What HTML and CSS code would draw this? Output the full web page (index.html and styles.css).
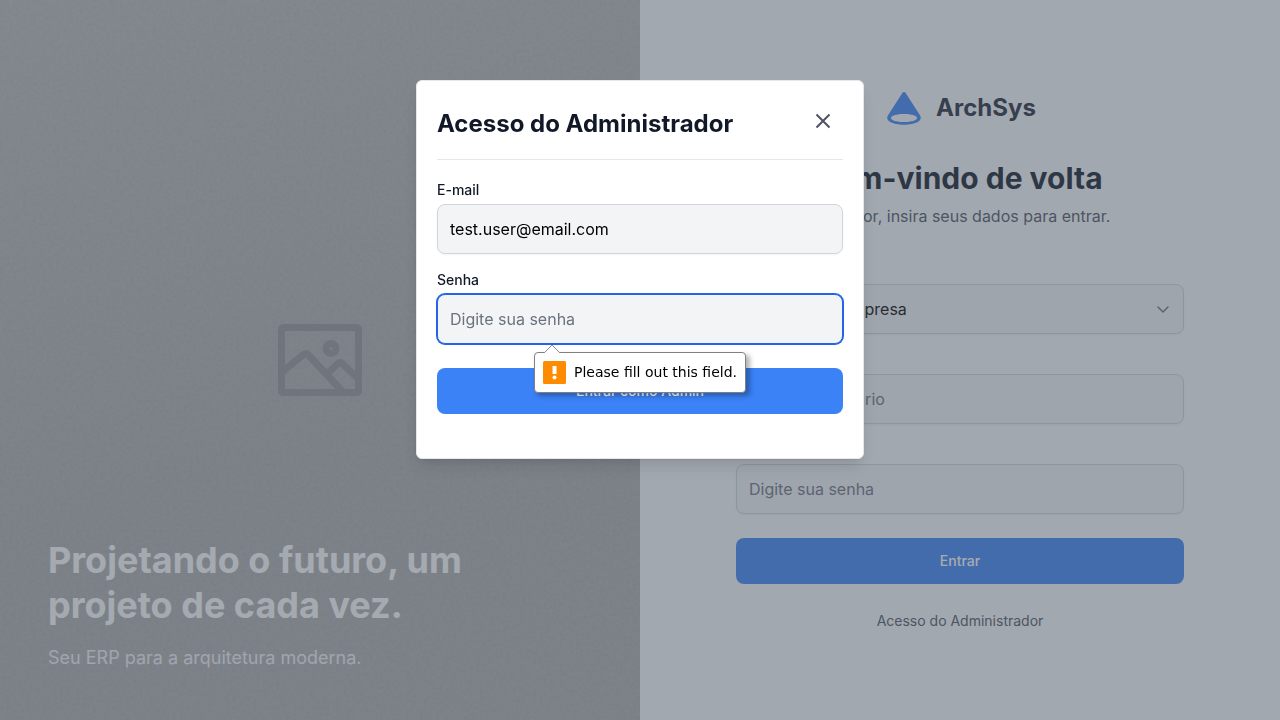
FILE: index.html
```html
<!DOCTYPE html>
<html lang="pt-BR">
<head>
<meta charset="utf-8">
<meta name="viewport" content="width=device-width, initial-scale=1">
<title>ArchSys</title>
<link rel="stylesheet" href="styles.css">
</head>
<body>
<main class="page">
  <section class="hero">
    <svg class="hero-texture" aria-hidden="true">
      <filter id="grain" x="0" y="0" width="100%" height="100%">
        <feTurbulence type="fractalNoise" baseFrequency="0.3" numOctaves="3" seed="4"/>
        <feColorMatrix values="1 0 0 0 0  1 0 0 0 0  1 0 0 0 0  0 0 0 0 1"/>
      </filter>
      <rect width="100%" height="100%" filter="url(#grain)"/>
    </svg>
    <svg class="hero-picture" viewBox="0 0 84 72" fill="none" stroke="currentColor" stroke-width="7" stroke-linejoin="round" aria-hidden="true">
      <path d="M6 3.500H78Q80.500 3.500 80.500 6V66Q80.500 68.500 78 68.500H6Q3.500 68.500 3.500 66V6Q3.500 3.500 6 3.500ZM3.500 48.500L25.500 30.500Q28 28.500 30.500 31L65 68M51 48L59.500 40Q62 37.500 64.500 40L80 54.500"/>
      <circle cx="53" cy="24.500" r="5" stroke-width="7"/>
    </svg>
    <div class="hero-copy">
      <h1 class="hero-title">Projetando o futuro, um projeto de cada vez.</h1>
      <p class="hero-text">Seu ERP para a arquitetura moderna.</p>
    </div>
  </section>
  <section class="login">
    <div class="login-inner">
      <div class="brand">
        <svg class="brand-logo" viewBox="0 0 40 40" fill="currentColor" aria-hidden="true">
          <path fill-rule="evenodd" d="M18.500 4.800Q20 3.200 21.500 4.800L35.800 27C39.500 32.500 32 36.700 20 36.700S.5 32.500 4.200 27ZM20 26C12.500 26 7 27.600 7 30S12.500 34 20 34 33 32.400 33 30 27.500 26 20 26Z"/>
        </svg>
        <span class="brand-name">ArchSys</span>
      </div>
      <h2 class="login-title">Bem-vindo de volta</h2>
      <p class="login-text">Por favor, insira seus dados para entrar.</p>
      <form class="form">
        <div class="field">
          <label class="label" for="company">Empresa</label>
          <div class="select-wrap">
            <select class="input select" id="company"><option>Selecione a empresa</option></select>
            <svg class="chevron" viewBox="0 0 20 20" fill="none" stroke="currentColor" stroke-width="1.5" stroke-linecap="round" stroke-linejoin="round" aria-hidden="true"><path d="M5 8l5 5 5-5"/></svg>
          </div>
        </div>
        <div class="field">
          <label class="label" for="user">Usuário</label>
          <input class="input" id="user" type="text" placeholder="Digite seu usuário">
        </div>
        <div class="field">
          <label class="label" for="password">Senha</label>
          <input class="input" id="password" type="password" placeholder="Digite sua senha">
        </div>
        <button class="button" type="submit">Entrar</button>
      </form>
      <button class="admin-link" type="button">Acesso do Administrador</button>
    </div>
  </section>
</main>
<div class="overlay">
  <div class="modal" role="dialog" aria-modal="true" aria-labelledby="modal-title">
    <div class="modal-header">
      <h3 class="modal-title" id="modal-title">Acesso do Administrador</h3>
      <button class="close" type="button" aria-label="Fechar">
        <svg class="close-icon" viewBox="0 0 24 24" fill="none" stroke="currentColor" stroke-width="2" aria-hidden="true"><path d="M5.500 5.500l13 13M18.500 5.500l-13 13"/></svg>
      </button>
    </div>
    <form class="form modal-form">
      <div class="field">
        <label class="label" for="admin-email">E-mail</label>
        <input class="input" id="admin-email" type="email" value="test.user@email.com">
      </div>
      <div class="field">
        <label class="label" for="admin-password">Senha</label>
        <input class="input input-active" id="admin-password" type="password" placeholder="Digite sua senha">
        <div class="hint" role="alert">
          <svg class="hint-arrow" viewBox="0 0 18 9" aria-hidden="true"><path d="M1 9L9 1l8 8" fill="#fff" stroke="#8a8a8a"/></svg>
          <svg class="hint-icon" viewBox="0 0 23 23" aria-hidden="true"><rect width="23" height="23" rx="1.500" fill="#ff8c00"/><path d="M9.500 5h4v8h-4z" fill="#fff"/><circle cx="11.500" cy="16.500" r="2" fill="#fff"/></svg>
          <span>Please fill out this field.</span>
        </div>
      </div>
      <button class="button" type="submit">Entrar como Admin</button>
    </form>
  </div>
</div>
</body>
</html>
```
FILE: styles.css
```css
* { box-sizing: border-box; }

body, h1, h2, h3, p { margin: 0; }

body {
  font-family: Inter, "Liberation Sans", sans-serif;
  font-size: 16px;
  line-height: 24px;
  color: #111827;
  background: #f9fafb;
}

button, input, select { font: inherit; }
button { border: 0; cursor: pointer; }

.page {
  display: grid;
  grid-template-columns: 1fr 1fr;
  min-height: 100vh;
}

.hero {
  position: relative;
  display: flex;
  align-items: flex-end;
  padding: 48px;
  background: linear-gradient(165deg, #bababa, #acacac 60%, #adadac);
  color: #fff;
}

.hero-texture {
  position: absolute;
  inset: 0;
  width: 100%;
  height: 100%;
  opacity: 0.07;
}

.hero-picture {
  position: absolute;
  inset: 0;
  margin: auto;
  width: 84px;
  height: 72px;
  color: #929396;
}

.hero-copy { position: relative; }

.hero-title {
  max-width: 512px;
  font-size: 36px;
  line-height: 45px;
  font-weight: 700;
}

.hero-text {
  margin-top: 16px;
  font-size: 18px;
  line-height: 28px;
  color: #f3f4f6;
}

.login {
  display: flex;
  align-items: center;
  justify-content: center;
  padding: 48px;
}

.login-inner {
  width: 100%;
  max-width: 448px;
  text-align: center;
}

.brand {
  display: flex;
  align-items: center;
  justify-content: center;
  gap: 12px;
}

.brand-logo {
  width: 40px;
  height: 40px;
  color: #3b82f6;
}

.brand-name {
  font-size: 24px;
  line-height: 32px;
  font-weight: 700;
  color: #1f2937;
}

.login-title {
  margin-top: 32px;
  font-size: 30px;
  line-height: 36px;
  font-weight: 700;
}

.login-text {
  margin-top: 8px;
  color: #4b5563;
}

.form {
  display: flex;
  flex-direction: column;
  gap: 16px;
  margin-top: 32px;
  text-align: left;
}

.field {
  position: relative;
  display: flex;
  flex-direction: column;
  gap: 4px;
}

.label {
  font-size: 14px;
  line-height: 20px;
  font-weight: 500;
}

.input {
  width: 100%;
  height: 50px;
  padding: 12px;
  border: 1px solid #d1d5db;
  border-radius: 8px;
  background: #f3f4f6;
  color: #000;
  box-shadow: 0 1px 2px rgba(0, 0, 0, 0.05);
}

.input::placeholder { color: #6b7280; }

.input-active {
  border-color: #2563eb;
  box-shadow: 0 0 0 1px #2563eb;
}

.select-wrap { position: relative; }
.select { appearance: none; }

.chevron {
  position: absolute;
  top: 15px;
  right: 11px;
  width: 20px;
  height: 20px;
  color: #6b7280;
  pointer-events: none;
}

.button {
  margin-top: 8px;
  padding: 13px 16px;
  border-radius: 8px;
  background: #3b82f6;
  color: #fff;
  font-size: 14px;
  line-height: 20px;
  font-weight: 500;
}

.admin-link {
  margin-top: 27px;
  padding: 0;
  background: none;
  color: #4b5563;
  font-size: 14px;
  line-height: 20px;
}

.overlay {
  position: fixed;
  inset: 0;
  padding: 80px 16px;
  overflow: auto;
  background: rgba(75, 85, 99, 0.5);
}

.modal {
  max-width: 448px;
  margin: 0 auto;
  padding: 20px 20px 44px;
  border: 1px solid #e5e7eb;
  border-radius: 6px;
  background: #fff;
  box-shadow: 0 10px 15px -3px rgba(0, 0, 0, 0.1), 0 4px 6px -4px rgba(0, 0, 0, 0.1);
}

.modal-header {
  display: flex;
  justify-content: space-between;
  align-items: flex-start;
  padding-bottom: 12px;
  border-bottom: 1px solid #e5e7eb;
}

.modal-title {
  padding: 7px 0;
  font-size: 24px;
  line-height: 32px;
  font-weight: 700;
}

.close {
  display: flex;
  padding: 8px;
  background: none;
  color: #4b5563;
}

.close-icon {
  width: 24px;
  height: 24px;
}

.modal-form { margin-top: 20px; }

.hint {
  position: absolute;
  top: 100%;
  left: 50%;
  z-index: 1;
  display: flex;
  align-items: center;
  gap: 8px;
  margin-top: 8px;
  padding: 8px;
  border: 1px solid #808080;
  border-radius: 4px;
  background: #fff;
  box-shadow: 3px 3px 5px rgba(0, 0, 0, 0.3);
  color: #000;
  font-family: "DejaVu Sans", sans-serif;
  font-size: 14px;
  line-height: 21px;
  white-space: nowrap;
  transform: translateX(-50%);
}

.hint-arrow {
  position: absolute;
  top: -9px;
  left: 8px;
  width: 18px;
  height: 9px;
}

.hint-icon {
  width: 23px;
  height: 23px;
}
```
